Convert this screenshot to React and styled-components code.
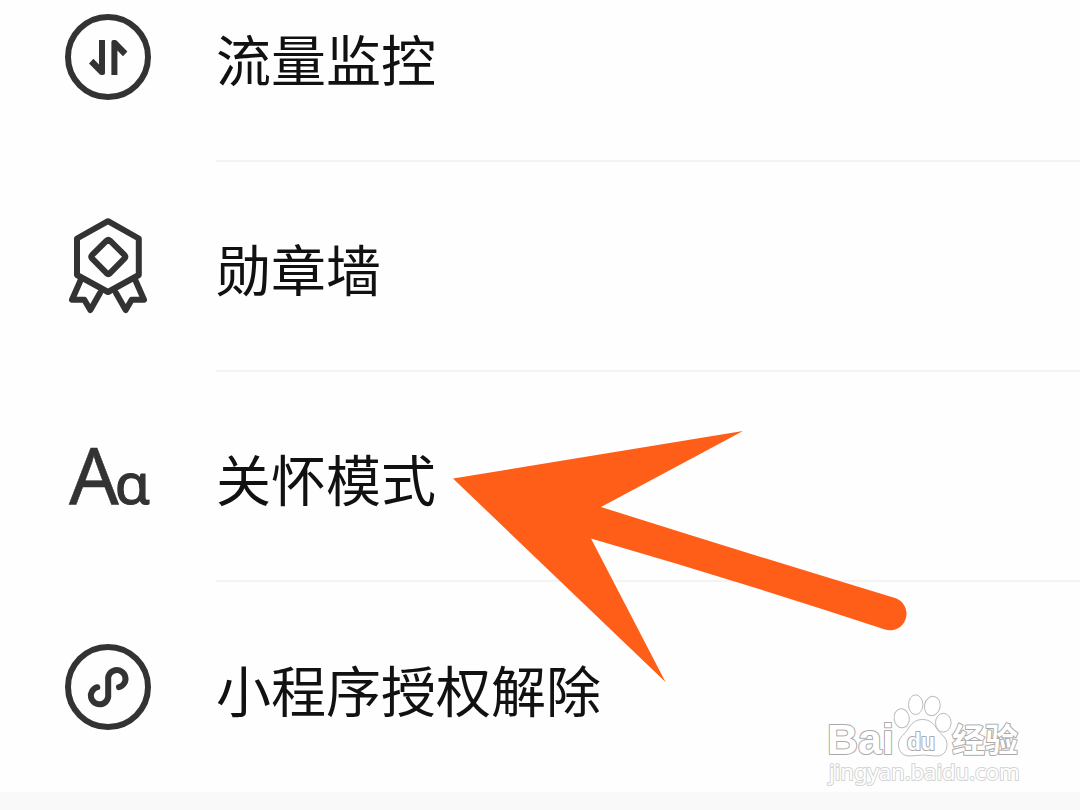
import React from 'react';
import styled, { createGlobalStyle } from 'styled-components';

const GlobalStyle = createGlobalStyle`
  * {
    box-sizing: border-box;
  }

  body {
    margin: 0;
    background-color: #f9f9f9;
    font-family: 'Noto Sans', 'Noto Sans CJK SC', sans-serif;
  }
`;

const TrafficIcon = () => (
  <Icon viewBox="0 0 120 120" aria-hidden="true">
    <circle cx="60" cy="60" r="40" />
    <g fill="#333" stroke="none">
      <path id="half" d="M51 43H57V76Q57 78 55 78H53.2Q52.4 78 51.6 77.3L41 66.6L45.4 61.8L51 67.4Z" />
      <use href="#half" transform="rotate(180 60.2 60.5)" />
    </g>
  </Icon>
);

const MedalIcon = () => (
  <Icon viewBox="0 0 120 120" aria-hidden="true">
    <path d="M60 14.2L90.8 31.5V68L60 85L29 68V31.5Z" />
    <path d="M58.6 33.6Q60.3 32 62 33.6L76.6 48.2Q78 49.8 76.6 51.4L62 66.2Q60.3 67.8 58.6 66.2L44 51.4Q42.6 49.8 44 48.2Z" />
    <path d="M32.7 73L24 92.7H36.3L42.3 103L52 86" />
    <path d="M87.3 73L96 92.7H83.7L77.7 103L68 86" />
  </Icon>
);

const FontIcon = () => (
  <Icon viewBox="0 0 120 120" aria-hidden="true">
    <text x="21" y="87" fontSize="78" fill="#333" strokeWidth="0.6">
      A<tspan dx="-4" fontSize="57" strokeWidth="1.2">ɑ</tspan>
    </text>
  </Icon>
);

const MiniProgramIcon = () => (
  <Icon viewBox="0 0 120 120" aria-hidden="true">
    <circle cx="60" cy="60" r="40" />
    <path d="M49.3 60.2A8.7 8.7 0 1 0 60.2 67.6V53.2A8.7 8.7 0 1 1 71 60.2" />
  </Icon>
);

const items = [
  { label: '流量监控', icon: TrafficIcon },
  { label: '勋章墙', icon: MedalIcon },
  { label: '关怀模式', icon: FontIcon, pointed: true },
  { label: '小程序授权解除', icon: MiniProgramIcon },
];

function App() {
  return (
    <Page>
      <GlobalStyle />
      <List>
        {items.map(({ label, icon: ItemIcon, pointed }) => (
          <Item key={label}>
            <Row type="button">
              <ItemIcon />
              <Label>{label}</Label>
            </Row>
            {pointed && (
              <Arrow viewBox="0 0 456 252" aria-hidden="true">
                <path d="M0 47.5L290 0L148 76Q290 121 442 167A16.4 16.4 0 0 1 432 198.5Q285 150 138 107.5L212.5 251Z" />
              </Arrow>
            )}
          </Item>
        ))}
      </List>
      <Watermark viewBox="0 0 200 100">
        <OutlineText x="2" y="62" fontSize="43">Bai</OutlineText>
        <OutlineText x="127" y="60" fontSize="33">经验</OutlineText>
        <ellipse cx="76.7" cy="26.3" rx="7.6" ry="9.6" transform="rotate(-8 76.7 26.3)" />
        <ellipse cx="90.7" cy="12.7" rx="7.2" ry="9.8" />
        <ellipse cx="107.3" cy="14" rx="7.8" ry="9.8" transform="rotate(12 107.3 14)" />
        <ellipse cx="118.3" cy="30.7" rx="7.8" ry="9.4" />
        <path d="M97.5 27.5C105 27.5 109 32 112 37C115 42 122 45 122 52.5C122 60 118 64 111 64Q97.5 62 85 64C78 64 73.5 60 73.5 52.5C73.5 45 80 42 83 37C86 32 90 27.5 97.5 27.5Z" />
        <OutlineText x="82" y="58" fontSize="23">du</OutlineText>
        <UrlText x="4" y="88">jingyan.baidu.com</UrlText>
      </Watermark>
    </Page>
  );
}

const Page = styled.main`
  position: relative;
  overflow: hidden;
`;

// the list is scrolled a little way past its first row
const List = styled.ul`
  margin: -48px 0 0;
  padding: 0;
  list-style: none;
  background-color: #fefefe;
`;

const Item = styled.li`
  position: relative;
`;

const Row = styled.button`
  display: grid;
  grid-template-columns: 216px 1fr;
  align-items: center;
  justify-items: center;
  width: 100%;
  height: 210px;
  padding: 0;
  border: 0;
  background: none;
  color: #111;
  font: inherit;
  text-align: left;
  cursor: pointer;
`;

const Icon = styled.svg`
  width: 120px;
  height: 120px;
  fill: none;
  stroke: #333;
  stroke-width: 6px;
  stroke-linecap: round;
  stroke-linejoin: round;

  g {
    stroke: none;
  }
`;

const Label = styled.span`
  display: flex;
  align-items: center;
  width: 100%;
  height: 100%;
  padding-top: 2px;
  border-bottom: 2px solid #f3f3f3;
  font-family: 'Noto Sans CJK SC', sans-serif;
  font-size: 55px;
  line-height: 80px;

  ${Item}:last-child & {
    border-bottom: 0;
  }
`;

const Arrow = styled.svg`
  position: absolute;
  z-index: 1;
  top: 59px;
  left: 453px;
  width: 456px;
  height: 252px;
  fill: #ff5e18;
  pointer-events: none;
`;

const Watermark = styled.svg`
  position: absolute;
  right: 55px;
  bottom: 0;
  width: 200px;
  height: 100px;
  fill: #fff;
  stroke: #bbb;
  stroke-width: 1px;
  stroke-linejoin: round;
  pointer-events: none;
`;

const OutlineText = styled.text`
  font-family: 'Liberation Sans', 'Noto Sans CJK SC', sans-serif;
  font-weight: 700;
  stroke: #aaa;
  stroke-width: 2px;
  paint-order: stroke;
`;

const UrlText = styled.text`
  font-size: 22px;
  stroke: #d4d4d4;
  stroke-width: 2px;
  paint-order: stroke;
`;

export default App;
